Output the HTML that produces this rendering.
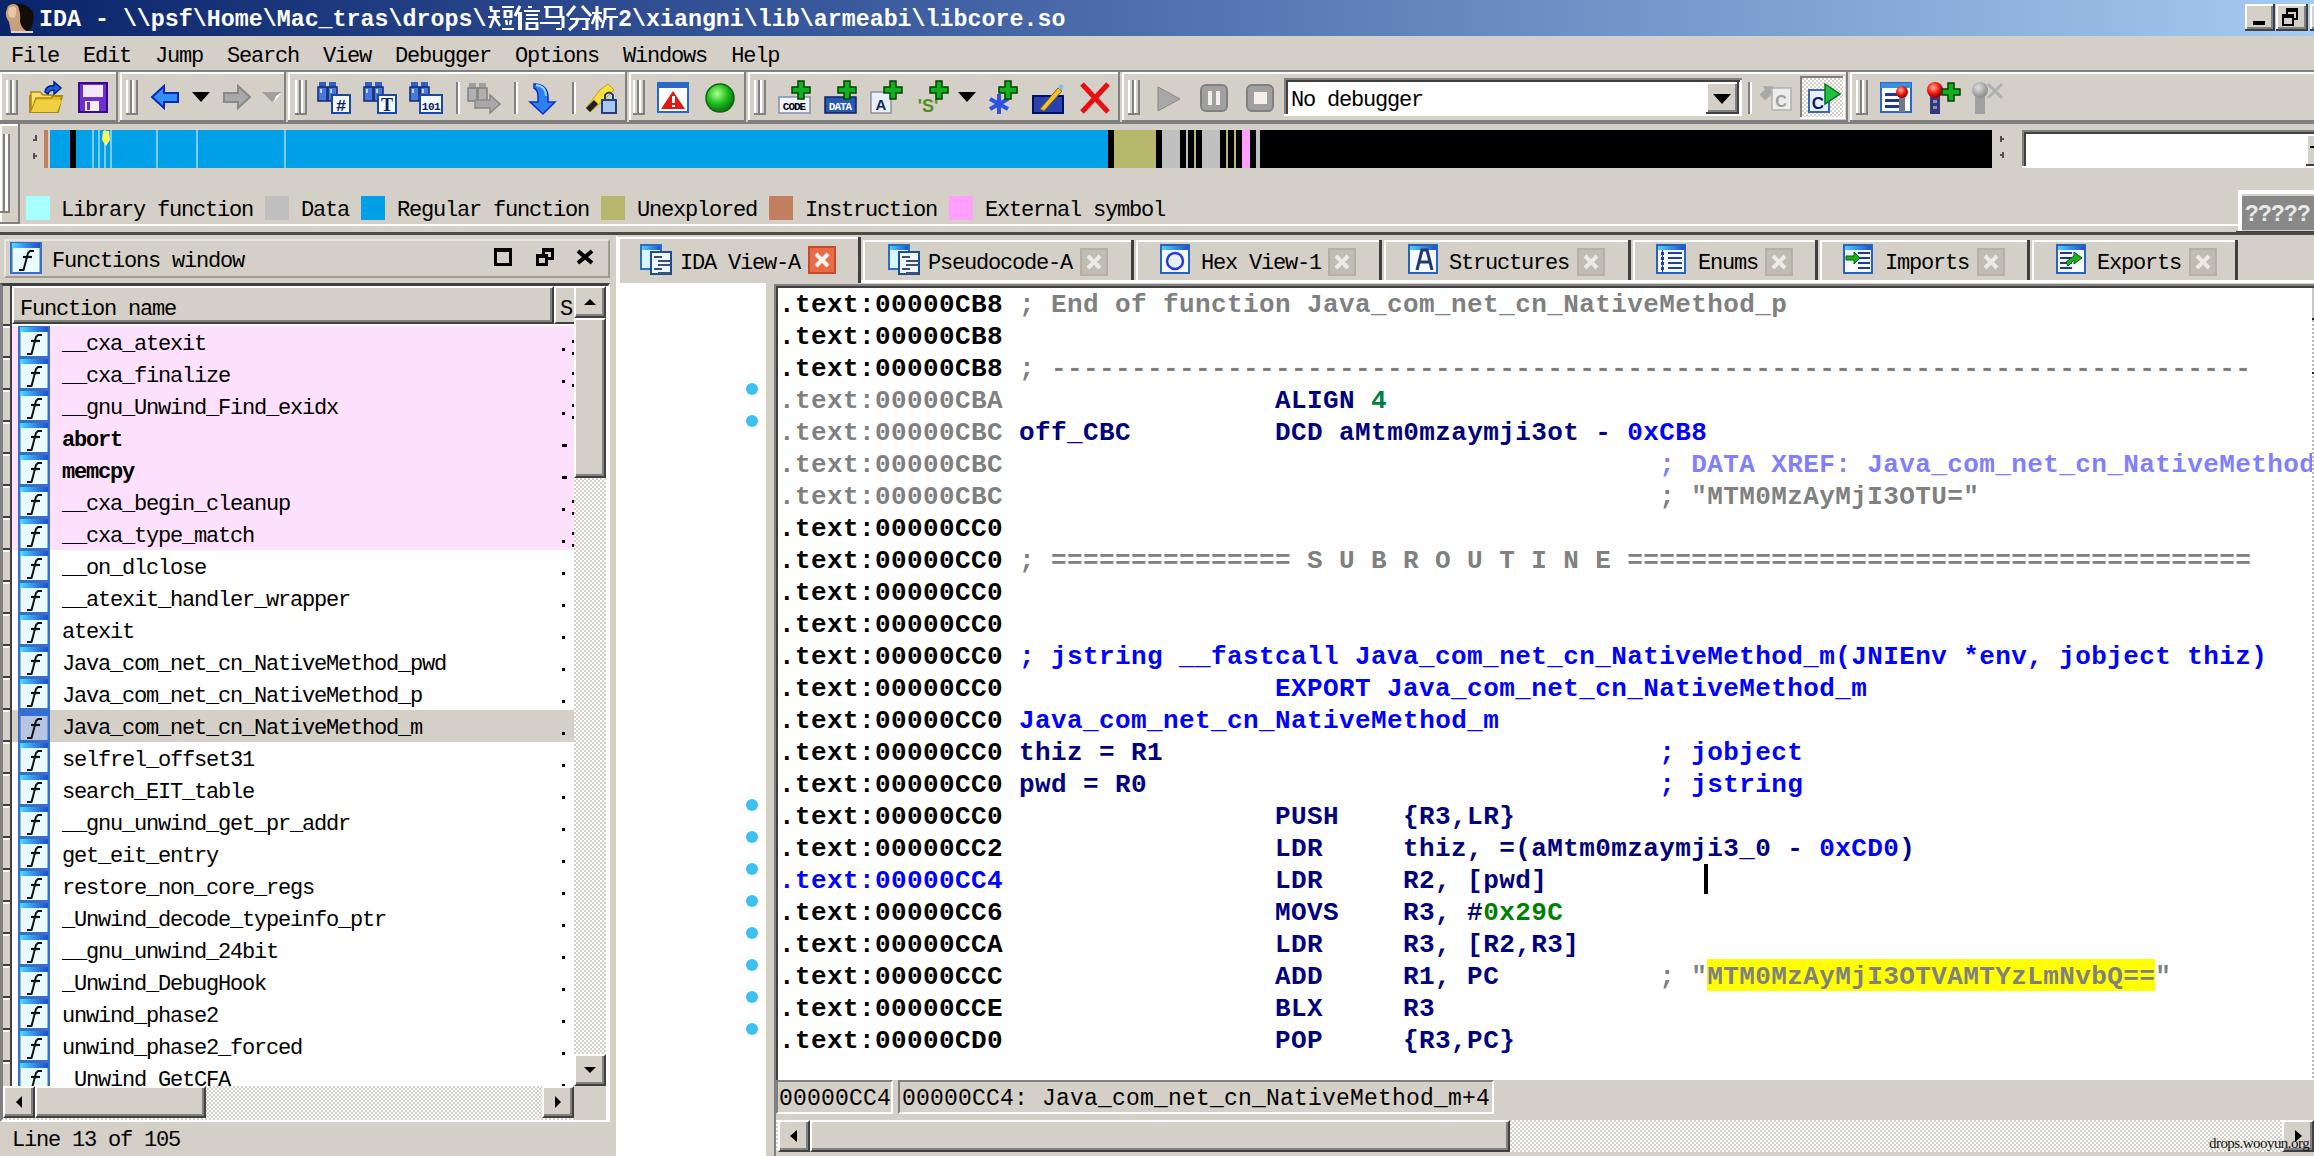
<!DOCTYPE html>
<html><head><meta charset="utf-8">
<style>
*{margin:0;padding:0;box-sizing:border-box}
html,body{width:2314px;height:1156px;overflow:hidden;background:#D4D0C8;position:relative}
.a{position:absolute}
.ui{font-family:"Liberation Mono",monospace;font-size:22px;letter-spacing:-1.2px;color:#000;white-space:pre;line-height:32px;padding-top:3px}
.code{font-family:"Liberation Mono",monospace;font-weight:bold;font-size:26px;letter-spacing:0.4px;white-space:pre;line-height:32px}
#title{left:0;top:0;width:2314px;height:36px;background:linear-gradient(to right,#0A246A 0%,#4262A4 42%,#A6CAF0 100%)}
#ttext2{left:618px;top:4px;font-family:"Liberation Mono",monospace;font-weight:bold;font-size:23.3px;letter-spacing:0px;color:#fff;white-space:pre;line-height:32px}
#ttext{left:39px;top:4px;font-family:"Liberation Mono",monospace;font-weight:bold;font-size:23.3px;letter-spacing:0px;color:#fff;white-space:pre;line-height:32px}
#menu{left:11px;top:38px}
.tb{top:71px;height:52px;border-top:2px solid #fff;border-bottom:2px solid #808080}
.grip{top:80px;width:12px;height:35px;border-left:2px solid #fff;border-right:2px solid #808080;box-shadow:inset -4px 0 0 #D4D0C8,inset -6px 0 0 #fff}
.sep{top:82px;width:4px;height:32px;border-left:2px solid #808080;border-right:2px solid #fff}
.nav{top:130px;height:38px}
.lsq{top:196px;width:24px;height:24px}
.ltx{top:192px}
.ficon{width:32px;height:31px;border:2px solid #3A6CC8;border-top:6px solid #2F7BE0;background:linear-gradient(#F4FCFF,#DDF4FC)}
.ficon:after{content:"f";position:absolute;left:5px;top:-3px;font-family:"Liberation Serif",serif;font-style:italic;font-size:26px;color:#000;line-height:26px}
.btn{background:#D4D0C8;border-top:2px solid #fff;border-left:2px solid #fff;border-right:2px solid #404040;border-bottom:2px solid #404040;box-shadow:inset -2px -2px 0 #808080}
.chk{background-color:#E8E6E2;background-image:repeating-conic-gradient(#D4D0C8 0 25%,#fff 0 50%);background-size:4px 4px}
.ticon{width:32px;height:32px;border:2px solid #3A6CC8;border-top:6px solid #2F7BE0;background:#F0F8FF}
.stat{font-family:"Liberation Mono",monospace;font-size:23px;letter-spacing:0.2px;color:#000;white-space:pre;line-height:34px}
</style></head>
<body>
<svg width="0" height="0" style="position:absolute"><defs>
<linearGradient id="fbar" x1="0" x2="1"><stop offset="0" stop-color="#48E0F8"/><stop offset="0.5" stop-color="#3090E8"/><stop offset="1" stop-color="#1E50C8"/></linearGradient>
<symbol id="fic" viewBox="0 0 32 32"><rect x="0" y="0" width="32" height="32" fill="#3A6EC4"/><rect x="2" y="1" width="28" height="5" fill="url(#fbar)"/><rect x="2.5" y="6" width="27" height="24" fill="#EAFBFD"/>
<path d="M24 9 L20 9 L18 11 L13.5 28 L9 28" stroke="#101010" stroke-width="2" fill="none"/><path d="M13 15 L22 15" stroke="#101010" stroke-width="2.2"/></symbol>
<symbol id="ficsel" viewBox="0 0 32 32"><rect x="0" y="0" width="32" height="32" fill="#3A6EC4"/><rect x="2" y="1" width="28" height="5" fill="#3070D8"/><rect x="2.5" y="6" width="27" height="24" fill="#B8C4E0"/>
<path d="M24 9 L20 9 L18 11 L13.5 28 L9 28" stroke="#101010" stroke-width="2" fill="none"/><path d="M13 15 L22 15" stroke="#101010" stroke-width="2.2"/></symbol>
</defs></svg>
<!-- title bar -->
<div id="title" class="a"></div>
<div id="ttext" class="a">IDA - \\psf\Home\Mac_tras\drops\</div><div id="ttext2" class="a">2\xiangni\lib\armeabi\libcore.so</div>
<!-- menu -->
<!--TT--><svg class="a" style="left:0;top:0" width="2314" height="36"><rect x="489.5" y="6" width="3" height="4" fill="#fff"/><rect x="490" y="10" width="10" height="2" fill="#fff"/><rect x="493.5" y="10" width="3" height="8" fill="#fff"/><rect x="488" y="16" width="12" height="2" fill="#fff"/><rect x="502" y="6" width="12" height="2" fill="#fff"/><rect x="503.5" y="10" width="3" height="8" fill="#fff"/><rect x="509.5" y="10" width="3" height="8" fill="#fff"/><rect x="504" y="10" width="8" height="2" fill="#fff"/><rect x="504" y="16" width="8" height="2" fill="#fff"/><rect x="502" y="28" width="12" height="2" fill="#fff"/><path d="M494 18 L490 28" stroke="#fff" stroke-width="2.5" fill="none"/><path d="M495.0 18 L500 26" stroke="#fff" stroke-width="2.5" fill="none"/><path d="M506 20 L507.0 25.0" stroke="#fff" stroke-width="2.5" fill="none"/><path d="M511.0 20 L510 25.0" stroke="#fff" stroke-width="2.5" fill="none"/><path d="M520 6 L515.0 16" stroke="#fff" stroke-width="3" fill="none"/><rect x="518" y="12" width="4" height="18" fill="#fff"/><rect x="528" y="6" width="4" height="2" fill="#fff"/><rect x="524" y="10" width="16" height="2" fill="#fff"/><rect x="526" y="14" width="12" height="2" fill="#fff"/><rect x="526" y="18" width="12" height="2" fill="#fff"/><rect x="525.5" y="22" width="3" height="8" fill="#fff"/><rect x="535.5" y="22" width="3" height="8" fill="#fff"/><rect x="526" y="22" width="12" height="2" fill="#fff"/><rect x="526" y="28" width="12" height="2" fill="#fff"/><rect x="544" y="6" width="18" height="2" fill="#fff"/><rect x="559.5" y="6" width="3" height="10" fill="#fff"/><rect x="545.5" y="8" width="3" height="10" fill="#fff"/><rect x="546" y="16" width="18" height="2" fill="#fff"/><rect x="561.5" y="16" width="3" height="12" fill="#fff"/><rect x="540" y="22" width="20" height="2" fill="#fff"/><rect x="556" y="28" width="6" height="2" fill="#fff"/><path d="M575.0 6 L567.0 16" stroke="#fff" stroke-width="3" fill="none"/><path d="M582 6 L591.0 16" stroke="#fff" stroke-width="3" fill="none"/><rect x="570" y="18" width="20" height="2" fill="#fff"/><rect x="585.5" y="18" width="3" height="12" fill="#fff"/><rect x="582" y="28" width="6" height="2" fill="#fff"/><path d="M578 18 L576 24 L569.0 30" stroke="#fff" stroke-width="3" fill="none"/><rect x="592" y="12" width="10" height="2" fill="#fff"/><rect x="595.5" y="6" width="3" height="24" fill="#fff"/><rect x="604" y="8" width="12" height="2" fill="#fff"/><rect x="603.5" y="8" width="3" height="12" fill="#fff"/><rect x="604" y="16" width="14" height="2" fill="#fff"/><rect x="609.5" y="16" width="3" height="14" fill="#fff"/><path d="M596 14 L592 24" stroke="#fff" stroke-width="2.5" fill="none"/><path d="M598 16 L602 22" stroke="#fff" stroke-width="2.5" fill="none"/><path d="M604 20 L602 28" stroke="#fff" stroke-width="2.5" fill="none"/><rect x="2245" y="4" width="30" height="27" fill="#D4D0C8"/><rect x="2245" y="4" width="30" height="2" fill="#fff"/><rect x="2245" y="4" width="2" height="27" fill="#fff"/><rect x="2245" y="29" width="30" height="2" fill="#404040"/><rect x="2273" y="4" width="2" height="27" fill="#404040"/><rect x="2247" y="27" width="26" height="2" fill="#808080"/><rect x="2271" y="6" width="2" height="23" fill="#808080"/><rect x="2253" y="21" width="12" height="4" fill="#000"/><rect x="2276" y="4" width="32" height="27" fill="#D4D0C8"/><rect x="2276" y="4" width="32" height="2" fill="#fff"/><rect x="2276" y="4" width="2" height="27" fill="#fff"/><rect x="2276" y="29" width="32" height="2" fill="#404040"/><rect x="2306" y="4" width="2" height="27" fill="#404040"/><rect x="2278" y="27" width="28" height="2" fill="#808080"/><rect x="2304" y="6" width="2" height="23" fill="#808080"/><rect x="2286" y="8" width="12" height="4" fill="#000"/><rect x="2286" y="8" width="2" height="10" fill="#000"/><rect x="2296" y="8" width="2" height="12" fill="#000"/><rect x="2292" y="18" width="6" height="2" fill="#000"/><rect x="2282" y="14" width="12" height="4" fill="#000"/><rect x="2282" y="14" width="2" height="12" fill="#000"/><rect x="2292" y="14" width="2" height="12" fill="#000"/><rect x="2282" y="24" width="12" height="2" fill="#000"/><rect x="2310" y="4" width="10" height="27" fill="#D4D0C8"/><rect x="2310" y="4" width="10" height="2" fill="#fff"/><rect x="2310" y="4" width="2" height="27" fill="#fff"/><rect x="2310" y="29" width="10" height="2" fill="#404040"/><rect x="2318" y="4" width="2" height="27" fill="#404040"/><rect x="2312" y="27" width="6" height="2" fill="#808080"/><rect x="2316" y="6" width="2" height="23" fill="#808080"/><path d="M14 4 Q26 2 33 12 Q35 22 30 30 L26 32 L20 26 L16 10 Z" fill="#140C08"/><path d="M8 6 Q14 2 18 6 Q21 14 20 22 Q22 30 30 33 L11 33 Q10 26 9 22 Q5 16 6 12 Z" fill="#C8A080"/><path d="M9 8 Q13 5 16 8 Q17 14 14 18 Q9 18 8 13 Z" fill="#E8C8A0"/><rect x="11" y="31" width="22" height="2" fill="#E8D0C8"/></svg><!--/TT-->
<div id="menu" class="a ui">File  Edit  Jump  Search  View  Debugger  Options  Windows  Help</div>

<!-- toolbar band -->
<div class="a" style="left:0;top:70px;width:2314px;height:54px;background:#D4D0C8;border-top:2px solid #808080;border-bottom:2px solid #808080"></div>

<!--TB--><svg class="a" style="left:0;top:0" width="2314" height="124"><rect x="0" y="72" width="118" height="2" fill="#FFFFFF"/><rect x="0" y="72" width="2" height="50" fill="#FFFFFF"/><rect x="116" y="72" width="2" height="50" fill="#808080"/><rect x="0" y="120" width="118" height="2" fill="#808080"/><rect x="120" y="72" width="166" height="2" fill="#FFFFFF"/><rect x="120" y="72" width="2" height="50" fill="#FFFFFF"/><rect x="284" y="72" width="2" height="50" fill="#808080"/><rect x="120" y="120" width="166" height="2" fill="#808080"/><rect x="288" y="72" width="339" height="2" fill="#FFFFFF"/><rect x="288" y="72" width="2" height="50" fill="#FFFFFF"/><rect x="625" y="72" width="2" height="50" fill="#808080"/><rect x="288" y="120" width="339" height="2" fill="#808080"/><rect x="629" y="72" width="117" height="2" fill="#FFFFFF"/><rect x="629" y="72" width="2" height="50" fill="#FFFFFF"/><rect x="744" y="72" width="2" height="50" fill="#808080"/><rect x="629" y="120" width="117" height="2" fill="#808080"/><rect x="748" y="72" width="372" height="2" fill="#FFFFFF"/><rect x="748" y="72" width="2" height="50" fill="#FFFFFF"/><rect x="1118" y="72" width="2" height="50" fill="#808080"/><rect x="748" y="120" width="372" height="2" fill="#808080"/><rect x="1122" y="72" width="726" height="2" fill="#FFFFFF"/><rect x="1122" y="72" width="2" height="50" fill="#FFFFFF"/><rect x="1846" y="72" width="2" height="50" fill="#808080"/><rect x="1122" y="120" width="726" height="2" fill="#808080"/><rect x="1850" y="72" width="464" height="2" fill="#FFFFFF"/><rect x="1850" y="72" width="2" height="50" fill="#FFFFFF"/><rect x="1850" y="120" width="464" height="2" fill="#808080"/><rect x="6" y="80" width="2" height="35" fill="#FFFFFF"/><rect x="10" y="80" width="2" height="35" fill="#808080"/><rect x="12" y="80" width="2" height="35" fill="#FFFFFF"/><rect x="16" y="80" width="2" height="35" fill="#808080"/><rect x="6" y="113" width="6" height="2" fill="#808080"/><rect x="12" y="113" width="6" height="2" fill="#808080"/><rect x="126" y="80" width="2" height="35" fill="#FFFFFF"/><rect x="130" y="80" width="2" height="35" fill="#808080"/><rect x="132" y="80" width="2" height="35" fill="#FFFFFF"/><rect x="136" y="80" width="2" height="35" fill="#808080"/><rect x="126" y="113" width="6" height="2" fill="#808080"/><rect x="132" y="113" width="6" height="2" fill="#808080"/><rect x="295" y="80" width="2" height="35" fill="#FFFFFF"/><rect x="299" y="80" width="2" height="35" fill="#808080"/><rect x="301" y="80" width="2" height="35" fill="#FFFFFF"/><rect x="305" y="80" width="2" height="35" fill="#808080"/><rect x="295" y="113" width="6" height="2" fill="#808080"/><rect x="301" y="113" width="6" height="2" fill="#808080"/><rect x="633" y="80" width="2" height="35" fill="#FFFFFF"/><rect x="637" y="80" width="2" height="35" fill="#808080"/><rect x="639" y="80" width="2" height="35" fill="#FFFFFF"/><rect x="643" y="80" width="2" height="35" fill="#808080"/><rect x="633" y="113" width="6" height="2" fill="#808080"/><rect x="639" y="113" width="6" height="2" fill="#808080"/><rect x="754" y="80" width="2" height="35" fill="#FFFFFF"/><rect x="758" y="80" width="2" height="35" fill="#808080"/><rect x="760" y="80" width="2" height="35" fill="#FFFFFF"/><rect x="764" y="80" width="2" height="35" fill="#808080"/><rect x="754" y="113" width="6" height="2" fill="#808080"/><rect x="760" y="113" width="6" height="2" fill="#808080"/><rect x="1128" y="80" width="2" height="35" fill="#FFFFFF"/><rect x="1132" y="80" width="2" height="35" fill="#808080"/><rect x="1134" y="80" width="2" height="35" fill="#FFFFFF"/><rect x="1138" y="80" width="2" height="35" fill="#808080"/><rect x="1128" y="113" width="6" height="2" fill="#808080"/><rect x="1134" y="113" width="6" height="2" fill="#808080"/><rect x="1856" y="80" width="2" height="35" fill="#FFFFFF"/><rect x="1860" y="80" width="2" height="35" fill="#808080"/><rect x="1862" y="80" width="2" height="35" fill="#FFFFFF"/><rect x="1866" y="80" width="2" height="35" fill="#808080"/><rect x="1856" y="113" width="6" height="2" fill="#808080"/><rect x="1862" y="113" width="6" height="2" fill="#808080"/><rect x="456" y="82" width="2" height="32" fill="#808080"/><rect x="458" y="82" width="2" height="32" fill="#FFFFFF"/><rect x="514" y="82" width="2" height="32" fill="#808080"/><rect x="516" y="82" width="2" height="32" fill="#FFFFFF"/><rect x="572" y="82" width="2" height="32" fill="#808080"/><rect x="574" y="82" width="2" height="32" fill="#FFFFFF"/><rect x="1748" y="82" width="2" height="32" fill="#808080"/><rect x="1750" y="82" width="2" height="32" fill="#FFFFFF"/><path d="M30 96 L30 112 L58 112 L62 96 Z" fill="#E8C020" stroke="#B08810" stroke-width="2"/><path d="M31 92 L40 92 L43 95 L52 95 L52 98 L36 98 L31 112 Z" fill="#F8E070" stroke="#B08810" stroke-width="1.5"/><path d="M36 100 L62 100 L57 112 L31 112 Z" fill="#F0D040"/><path d="M45 92 Q46 85 54 86 L54 82 L61 88 L54 94 L54 90 Q49 90 48 94 Z" fill="#2060E0" stroke="#002080" stroke-width="1.5"/><rect x="79" y="83" width="28" height="29" fill="#7030D0" stroke="#3A0890" stroke-width="2"/><rect x="83" y="85" width="20" height="12" fill="#F4E8F8"/><rect x="85" y="101" width="14" height="10" fill="#F0F0F0"/><rect x="87" y="102" width="3" height="8" fill="#7030D0"/><path d="M152 97 L164 86 L164 93 L178 93 L178 102 L164 102 L164 108 Z" fill="#3090F8" stroke="#0828B8" stroke-width="2"/><path d="M192 92 L210 92 L201 102 Z" fill="#000"/><path d="M250 97 L238 86 L238 93 L224 93 L224 102 L238 102 L238 108 Z" fill="#A8A8A8" stroke="#888" stroke-width="2"/><path d="M262 92 L282 92 L272 102 Z" fill="#A0A0A0"/><path d="M276 96 L282 92 L274 102 Z" fill="#fff"/><rect x="319" y="82" width="7" height="6" fill="#3060C0"/><rect x="329" y="82" width="7" height="6" fill="#3060C0"/><rect x="318" y="87" width="9" height="14" fill="#4878D8" stroke="#102870" stroke-width="1.5"/><rect x="328" y="87" width="9" height="14" fill="#4878D8" stroke="#102870" stroke-width="1.5"/><rect x="320" y="89" width="2" height="4" fill="#C0D8FF"/><rect x="330" y="89" width="2" height="4" fill="#C0D8FF"/><rect x="332" y="95" width="18" height="18" fill="#F4F8FF" stroke="#1848A0" stroke-width="2"/><text x="341" y="111" font-family="Liberation Mono" font-weight="bold" font-size="17" text-anchor="middle" fill="#102060">#</text><rect x="365" y="82" width="7" height="6" fill="#3060C0"/><rect x="375" y="82" width="7" height="6" fill="#3060C0"/><rect x="364" y="87" width="9" height="14" fill="#4878D8" stroke="#102870" stroke-width="1.5"/><rect x="374" y="87" width="9" height="14" fill="#4878D8" stroke="#102870" stroke-width="1.5"/><rect x="366" y="89" width="2" height="4" fill="#C0D8FF"/><rect x="376" y="89" width="2" height="4" fill="#C0D8FF"/><rect x="378" y="95" width="18" height="18" fill="#F4F8FF" stroke="#1848A0" stroke-width="2"/><text x="387" y="111" font-family="Liberation Serif" font-weight="bold" font-size="18" text-anchor="middle" fill="#102060">T</text><rect x="411" y="82" width="7" height="6" fill="#3060C0"/><rect x="421" y="82" width="7" height="6" fill="#3060C0"/><rect x="410" y="87" width="9" height="14" fill="#4878D8" stroke="#102870" stroke-width="1.5"/><rect x="420" y="87" width="9" height="14" fill="#4878D8" stroke="#102870" stroke-width="1.5"/><rect x="412" y="89" width="2" height="4" fill="#C0D8FF"/><rect x="422" y="89" width="2" height="4" fill="#C0D8FF"/><rect x="420" y="95" width="22" height="18" fill="#F4F8FF" stroke="#1848A0" stroke-width="2"/><text x="431" y="110" font-family="Liberation Mono" font-weight="bold" font-size="11" text-anchor="middle" fill="#102060" letter-spacing="-0.5">101</text><rect x="469" y="83" width="7" height="6" fill="#A0A0A0"/><rect x="479" y="83" width="7" height="6" fill="#A0A0A0"/><rect x="468" y="88" width="9" height="13" fill="#B0B0B0" stroke="#808080" stroke-width="1.5"/><rect x="478" y="88" width="9" height="13" fill="#B0B0B0" stroke="#808080" stroke-width="1.5"/><path d="M475 100 L490 100 L490 95 L500 104 L490 113 L490 108 L475 108 Z" fill="#A8A8A8" stroke="#888" stroke-width="1.5"/><path d="M534 84 Q548 84 548 98 L548 102 L555 102 L543 114 L530 102 L538 102 L538 96 Q538 90 534 88 Z" fill="#2C80F0" stroke="#0830C0" stroke-width="1.5"/><path d="M536 85 Q546 86 546 96" stroke="#90D8FF" stroke-width="2" fill="none"/><path d="M586 108 L600 90 L608 84 L614 90 L604 100 L590 112 Z" fill="#F8E040" stroke="#C8A000" stroke-width="1"/><path d="M586 108 L594 100 L598 104 L590 112 Z" fill="#202020"/><rect x="602" y="100" width="14" height="13" fill="#A8C8F0" stroke="#204080" stroke-width="2"/><path d="M605 100 L605 95 Q609 90 613 95 L613 100" stroke="#204080" stroke-width="2" fill="none"/><rect x="658" y="83" width="30" height="29" fill="#fff" stroke="#2868C8" stroke-width="2"/><rect x="658" y="83" width="30" height="5" fill="#2868C8"/><path d="M673 91 L685 109 L661 109 Z" fill="#E01818"/><rect x="672" y="96" width="3" height="7" fill="#fff"/><rect x="672" y="105" width="3" height="2" fill="#fff"/><defs><radialGradient id="gb" cx="0.4" cy="0.35" r="0.6"><stop offset="0" stop-color="#B0FF90"/><stop offset="0.6" stop-color="#20C020"/><stop offset="1" stop-color="#108010"/></radialGradient><radialGradient id="rb" cx="0.4" cy="0.35" r="0.6"><stop offset="0" stop-color="#FFB0A0"/><stop offset="0.6" stop-color="#F02010"/><stop offset="1" stop-color="#A00000"/></radialGradient><radialGradient id="gyb" cx="0.4" cy="0.35" r="0.6"><stop offset="0" stop-color="#E0E0E0"/><stop offset="1" stop-color="#909090"/></radialGradient></defs><circle cx="720" cy="98" r="14" fill="url(#gb)" stroke="#0A6A0A" stroke-width="1.5"/><rect x="779" y="97" width="31" height="16" fill="#F0F4FF" stroke="#8090A0" stroke-width="1.5"/><text x="794" y="110" font-family="Liberation Mono" font-weight="bold" font-size="11" text-anchor="middle" fill="#000" letter-spacing="-1">CODE</text><path d="M798 81 h6 v6 h6 v6 h-6 v6 h-6 v-6 h-6 v-6 h6 Z" fill="#10B020" stroke="#004000" stroke-width="1.5"/><rect x="825" y="97" width="31" height="16" fill="#2858B8" stroke="#102060" stroke-width="1.5"/><text x="840" y="110" font-family="Liberation Mono" font-weight="bold" font-size="11" text-anchor="middle" fill="#fff" letter-spacing="-1">DATA</text><path d="M844 81 h6 v6 h6 v6 h-6 v6 h-6 v-6 h-6 v-6 h6 Z" fill="#10B020" stroke="#004000" stroke-width="1.5"/><rect x="871" y="92" width="20" height="21" fill="#E8F0FF" stroke="#909090" stroke-width="1.5"/><text x="881" y="110" font-family="Liberation Sans" font-weight="bold" font-size="15" text-anchor="middle" fill="#102860">A</text><path d="M890 81 h6 v6 h6 v6 h-6 v6 h-6 v-6 h-6 v-6 h6 Z" fill="#10B020" stroke="#004000" stroke-width="1.5"/><text x="928" y="112" font-family="Liberation Sans" font-weight="bold" font-size="18" text-anchor="middle" fill="#509020">'S'</text><path d="M936 81 h6 v6 h6 v6 h-6 v6 h-6 v-6 h-6 v-6 h6 Z" fill="#10B020" stroke="#004000" stroke-width="1.5"/><path d="M958 92 L976 92 L967 102 Z" fill="#000"/><g stroke="#3050E0" stroke-width="4"><path d="M999 94 L999 114"/><path d="M990 99 L1008 109"/><path d="M990 109 L1008 99"/></g><path d="M1005 81 h6 v6 h6 v6 h-6 v6 h-6 v-6 h-6 v-6 h6 Z" fill="#10B020" stroke="#004000" stroke-width="1.5"/><rect x="1033" y="96" width="30" height="17" fill="#2840B0" stroke="#001060" stroke-width="2"/><path d="M1040 109 L1058 88 L1062 91 L1044 111 Z" fill="#F0C030" stroke="#806010" stroke-width="1"/><circle cx="1061" cy="87" r="2.5" fill="#80C0FF"/><path d="M1082 84 L1108 112 M1108 84 L1082 112" stroke="#E81010" stroke-width="5"/><path d="M1158 87 L1180 99 L1158 111 Z" fill="#A8A8A8" stroke="#888" stroke-width="1"/><rect x="1201" y="85" width="26" height="26" rx="5" fill="#A0A0A0" stroke="#808080" stroke-width="2"/><rect x="1208" y="91" width="4" height="14" fill="#F4F0E8"/><rect x="1216" y="91" width="4" height="14" fill="#F4F0E8"/><rect x="1247" y="85" width="26" height="26" rx="5" fill="#A0A0A0" stroke="#808080" stroke-width="2"/><rect x="1254" y="92" width="13" height="12" fill="#F4F0E8"/><rect x="1284" y="78" width="458" height="38" fill="#fff"/><rect x="1284" y="78" width="458" height="2" fill="#808080"/><rect x="1284" y="78" width="2" height="38" fill="#808080"/><rect x="1286" y="80" width="454" height="2" fill="#404040"/><rect x="1286" y="80" width="2" height="34" fill="#404040"/><rect x="1284" y="114" width="458" height="2" fill="#fff"/><rect x="1706" y="82" width="33" height="32" fill="#D4D0C8"/><rect x="1706" y="82" width="31" height="2" fill="#fff"/><rect x="1706" y="82" width="2" height="30" fill="#fff"/><rect x="1737" y="82" width="2" height="32" fill="#404040"/><rect x="1706" y="112" width="33" height="2" fill="#404040"/><rect x="1735" y="84" width="2" height="28" fill="#808080"/><rect x="1708" y="110" width="29" height="2" fill="#808080"/><path d="M1713 94 L1731 94 L1722 104 Z" fill="#000"/><text x="1291" y="106" font-family="Liberation Mono" font-size="22" letter-spacing="-1.2" fill="#000">No debugger</text><path d="M1760 92 L1768 84 L1776 92 L1772 92 L1772 100 L1764 100 L1764 92 Z" fill="#A8A8A8" transform="rotate(45 1768 92)"/><rect x="1772" y="88" width="19" height="22" fill="#ECECEC" stroke="#B0B0B0" stroke-width="1.5"/><text x="1781" y="107" font-family="Liberation Sans" font-weight="bold" font-size="16" text-anchor="middle" fill="#A0A0A0">C</text><defs><pattern id="chk" width="4" height="4" patternUnits="userSpaceOnUse"><rect width="4" height="4" fill="#fff"/><rect width="2" height="2" fill="#D4D0C8"/><rect x="2" y="2" width="2" height="2" fill="#D4D0C8"/></pattern></defs><rect x="1800" y="76" width="45" height="43" fill="url(#chk)"/><rect x="1800" y="76" width="45" height="2" fill="#808080"/><rect x="1800" y="76" width="2" height="43" fill="#808080"/><rect x="1843" y="76" width="2" height="43" fill="#fff"/><rect x="1800" y="117" width="45" height="2" fill="#fff"/><rect x="1809" y="90" width="20" height="22" fill="#E8F0FF" stroke="#3868B0" stroke-width="2"/><text x="1818" y="109" font-family="Liberation Sans" font-weight="bold" font-size="17" text-anchor="middle" fill="#101870">C</text><path d="M1825 84 L1840 94 L1825 104 Z" fill="#20C040" stroke="#087020" stroke-width="1.5"/><rect x="1881" y="83" width="30" height="29" fill="#fff" stroke="#2868C8" stroke-width="2"/><rect x="1881" y="83" width="30" height="5" fill="#3890E0"/><rect x="1885" y="93" width="14" height="3" fill="#203890"/><rect x="1885" y="99" width="14" height="3" fill="#203890"/><rect x="1885" y="105" width="14" height="3" fill="#203890"/><rect x="1899" y="96" width="6" height="16" fill="#707888"/><circle cx="1902" cy="92" r="6" fill="url(#rb)"/><rect x="1930" y="96" width="10" height="18" fill="#303880"/><rect x="1933" y="100" width="4" height="3" fill="#9090A0"/><rect x="1933" y="106" width="4" height="3" fill="#9090A0"/><circle cx="1935" cy="90" r="8" fill="url(#rb)"/><path d="M1948 83 h6 v6 h6 v6 h-6 v6 h-6 v-6 h-6 v-6 h6 Z" fill="#10B020" stroke="#004000" stroke-width="1.5"/><rect x="1975" y="96" width="10" height="18" fill="#A0A0A0"/><circle cx="1980" cy="90" r="8" fill="url(#gyb)"/><path d="M1988 84 L2002 98 M2002 84 L1988 98" stroke="#B0B0B0" stroke-width="3"/></svg><!--/TB-->
<!-- nav band -->

<div class="a nav" style="left:44px;width:4px;background:#C08060"></div>
<div class="a nav" style="left:50px;width:1058px;background:#00A0E8"></div>
<div class="a nav" style="left:1108px;width:884px;background:#000"></div>
<div class="a nav" style="left:1114px;width:42px;background:#B8B86C"></div>
<div class="a nav" style="left:1162px;width:18px;background:#C0C0C0"></div>
<div class="a nav" style="left:1202px;width:18px;background:#C0C0C0"></div>
<div class="a nav" style="left:1242px;width:8px;background:#FFA0FF"></div>
<div class="a nav" style="left:1256px;width:4px;background:#C0C0C0"></div>


<!-- legend -->
<div class="a lsq" style="left:26px;background:#A8FFFF"></div><div class="a ui ltx" style="left:61px">Library function</div>
<div class="a lsq" style="left:265px;background:#C0C0C0"></div><div class="a ui ltx" style="left:301px">Data</div>
<div class="a lsq" style="left:361px;background:#00A0E8"></div><div class="a ui ltx" style="left:397px">Regular function</div>
<div class="a lsq" style="left:601px;background:#B8B86C"></div><div class="a ui ltx" style="left:637px">Unexplored</div>
<div class="a lsq" style="left:769px;background:#C08060"></div><div class="a ui ltx" style="left:805px">Instruction</div>
<div class="a lsq" style="left:949px;background:#FFA0FF"></div><div class="a ui ltx" style="left:985px">External symbol</div>


<!-- separator -->
<!--NB--><svg class="a" style="left:0;top:0" width="2314" height="240"><rect x="70" y="130" width="6" height="38" fill="#000"/><rect x="92" y="130" width="2" height="38" fill="#7ACCF4"/><rect x="98" y="130" width="2" height="38" fill="#7ACCF4"/><rect x="104" y="130" width="2" height="38" fill="#7ACCF4"/><rect x="110" y="130" width="2" height="38" fill="#7ACCF4"/><rect x="156" y="130" width="2" height="38" fill="#7ACCF4"/><rect x="196" y="130" width="2" height="38" fill="#7ACCF4"/><rect x="284" y="130" width="2" height="38" fill="#7ACCF4"/><path d="M103 131 L109 131 L110 140 L106 146 L102 140 Z" fill="#F8F860"/><rect x="35" y="135" width="2" height="6" fill="#505050"/><rect x="33" y="139" width="2" height="2" fill="#505050"/><rect x="33" y="153" width="2" height="6" fill="#505050"/><rect x="35" y="155" width="2" height="2" fill="#505050"/><rect x="2000" y="136" width="2" height="6" fill="#505050"/><rect x="2002" y="138" width="2" height="2" fill="#505050"/><rect x="2002" y="152" width="2" height="6" fill="#505050"/><rect x="2000" y="154" width="2" height="2" fill="#505050"/><rect x="1186" y="130" width="2" height="38" fill="#C0C0C0"/><rect x="1194" y="130" width="2" height="38" fill="#B8B86C"/><rect x="1226" y="130" width="2" height="38" fill="#B8B86C"/><rect x="1234" y="130" width="2" height="38" fill="#B8B86C"/><rect x="0" y="124" width="20" height="2" fill="#fff"/><rect x="0" y="124" width="2" height="100" fill="#fff"/><rect x="18" y="124" width="2" height="100" fill="#808080"/><rect x="0" y="222" width="20" height="2" fill="#808080"/><rect x="3" y="134" width="2" height="79" fill="#808080"/><rect x="5" y="134" width="3" height="79" fill="#fff"/><rect x="8" y="134" width="2" height="79" fill="#808080"/><rect x="0" y="211" width="10" height="2" fill="#808080"/><rect x="2022" y="130" width="292" height="38" fill="#fff"/><rect x="2022" y="130" width="292" height="2" fill="#808080"/><rect x="2022" y="130" width="2" height="38" fill="#808080"/><rect x="2024" y="132" width="290" height="2" fill="#404040"/><rect x="2024" y="132" width="2" height="34" fill="#404040"/><rect x="2022" y="166" width="292" height="2" fill="#fff"/><rect x="2306" y="134" width="8" height="32" fill="#D4D0C8"/><rect x="2306" y="134" width="8" height="2" fill="#fff"/><rect x="2306" y="134" width="2" height="32" fill="#fff"/><rect x="2306" y="164" width="8" height="2" fill="#404040"/><rect x="2310" y="146" width="4" height="2" fill="#000"/><rect x="2238" y="190" width="76" height="44" fill="#D4D0C8"/><rect x="2238" y="190" width="76" height="4" fill="#fff"/><rect x="2238" y="190" width="4" height="44" fill="#fff"/><rect x="2242" y="196" width="72" height="34" fill="#888888"/><rect x="2236" y="231" width="78" height="4" fill="#404040"/><text x="2245" y="221" font-family="Liberation Mono" font-weight="bold" font-size="23" letter-spacing="-0.8" fill="#E8E8E8">?????</text></svg><!--/NB-->
<div class="a" style="left:0;top:224px;width:2238px;height:2px;background:#fff"></div>
<div class="a" style="left:0;top:232px;width:2314px;height:3px;background:#4C4A46"></div>

<!-- FUNCTIONS PANE -->
<div class="a" style="left:0;top:236px;width:616px;height:920px;background:#D4D0C8"></div>
<div class="a" style="left:4px;top:239px;width:606px;height:39px;background:#D4D0C8;border-bottom:2px solid #A09C94;border-right:2px solid #A09C94;border-top:2px solid #E8E6E0;border-left:2px solid #E8E6E0"></div>
<svg class="a" style="left:10px;top:242px" width="32" height="32"><use href="#fic"/></svg>
<div class="a ui" style="left:52px;top:243px">Functions window</div>
<div class="a" style="left:494px;top:248px;width:18px;height:18px;border:3px solid #000;border-top-width:4px"></div>
<div class="a" style="left:542px;top:248px;width:12px;height:12px;border:3px solid #000;border-top-width:4px"></div>
<div class="a" style="left:536px;top:254px;width:12px;height:12px;border:3px solid #000;border-top-width:4px;background:#D4D0C8"></div>
<svg class="a" style="left:576px;top:249px" width="18" height="16"><path d="M2 2L16 14M16 2L2 14" stroke="#000" stroke-width="4"/></svg>
<div class="a" style="left:0;top:283px;width:610px;height:839px;border-top:3px solid #404040;border-left:3px solid #808080;border-right:2px solid #fff;border-bottom:3px solid #fff;background:#fff"></div>
<div class="a" style="left:3px;top:286px;width:9px;height:800px;background:#D4D0C8;border-right:2px solid #404040"></div>
<div class="a" style="left:3px;top:324px;width:7px;height:2px;background:#404040"></div>
<div class="a" style="left:3px;top:326px;width:7px;height:2px;background:#fff"></div>
<div class="a" style="left:3px;top:356px;width:7px;height:2px;background:#404040"></div>
<div class="a" style="left:3px;top:358px;width:7px;height:2px;background:#fff"></div>
<div class="a" style="left:3px;top:388px;width:7px;height:2px;background:#404040"></div>
<div class="a" style="left:3px;top:390px;width:7px;height:2px;background:#fff"></div>
<div class="a" style="left:3px;top:420px;width:7px;height:2px;background:#404040"></div>
<div class="a" style="left:3px;top:422px;width:7px;height:2px;background:#fff"></div>
<div class="a" style="left:3px;top:452px;width:7px;height:2px;background:#404040"></div>
<div class="a" style="left:3px;top:454px;width:7px;height:2px;background:#fff"></div>
<div class="a" style="left:3px;top:484px;width:7px;height:2px;background:#404040"></div>
<div class="a" style="left:3px;top:486px;width:7px;height:2px;background:#fff"></div>
<div class="a" style="left:3px;top:516px;width:7px;height:2px;background:#404040"></div>
<div class="a" style="left:3px;top:518px;width:7px;height:2px;background:#fff"></div>
<div class="a" style="left:3px;top:548px;width:7px;height:2px;background:#404040"></div>
<div class="a" style="left:3px;top:550px;width:7px;height:2px;background:#fff"></div>
<div class="a" style="left:3px;top:580px;width:7px;height:2px;background:#404040"></div>
<div class="a" style="left:3px;top:582px;width:7px;height:2px;background:#fff"></div>
<div class="a" style="left:3px;top:612px;width:7px;height:2px;background:#404040"></div>
<div class="a" style="left:3px;top:614px;width:7px;height:2px;background:#fff"></div>
<div class="a" style="left:3px;top:644px;width:7px;height:2px;background:#404040"></div>
<div class="a" style="left:3px;top:646px;width:7px;height:2px;background:#fff"></div>
<div class="a" style="left:3px;top:676px;width:7px;height:2px;background:#404040"></div>
<div class="a" style="left:3px;top:678px;width:7px;height:2px;background:#fff"></div>
<div class="a" style="left:3px;top:708px;width:7px;height:2px;background:#404040"></div>
<div class="a" style="left:3px;top:710px;width:7px;height:2px;background:#fff"></div>
<div class="a" style="left:3px;top:740px;width:7px;height:2px;background:#404040"></div>
<div class="a" style="left:3px;top:742px;width:7px;height:2px;background:#fff"></div>
<div class="a" style="left:3px;top:772px;width:7px;height:2px;background:#404040"></div>
<div class="a" style="left:3px;top:774px;width:7px;height:2px;background:#fff"></div>
<div class="a" style="left:3px;top:804px;width:7px;height:2px;background:#404040"></div>
<div class="a" style="left:3px;top:806px;width:7px;height:2px;background:#fff"></div>
<div class="a" style="left:3px;top:836px;width:7px;height:2px;background:#404040"></div>
<div class="a" style="left:3px;top:838px;width:7px;height:2px;background:#fff"></div>
<div class="a" style="left:3px;top:868px;width:7px;height:2px;background:#404040"></div>
<div class="a" style="left:3px;top:870px;width:7px;height:2px;background:#fff"></div>
<div class="a" style="left:3px;top:900px;width:7px;height:2px;background:#404040"></div>
<div class="a" style="left:3px;top:902px;width:7px;height:2px;background:#fff"></div>
<div class="a" style="left:3px;top:932px;width:7px;height:2px;background:#404040"></div>
<div class="a" style="left:3px;top:934px;width:7px;height:2px;background:#fff"></div>
<div class="a" style="left:3px;top:964px;width:7px;height:2px;background:#404040"></div>
<div class="a" style="left:3px;top:966px;width:7px;height:2px;background:#fff"></div>
<div class="a" style="left:3px;top:996px;width:7px;height:2px;background:#404040"></div>
<div class="a" style="left:3px;top:998px;width:7px;height:2px;background:#fff"></div>
<div class="a" style="left:3px;top:1028px;width:7px;height:2px;background:#404040"></div>
<div class="a" style="left:3px;top:1030px;width:7px;height:2px;background:#fff"></div>
<div class="a" style="left:3px;top:1060px;width:7px;height:2px;background:#404040"></div>
<div class="a" style="left:3px;top:1062px;width:7px;height:2px;background:#fff"></div>
<div class="a" style="left:3px;top:1092px;width:7px;height:2px;background:#404040"></div>
<div class="a" style="left:3px;top:1094px;width:7px;height:2px;background:#fff"></div>
<div class="a" style="left:12px;top:286px;width:542px;height:38px;background:#D4D0C8;border-top:2px solid #fff;border-left:2px solid #fff;border-right:2px solid #404040;border-bottom:2px solid #404040;box-shadow:inset -2px -2px 0 #808080"></div>
<div class="a ui" style="left:20px;top:291px">Function name</div>
<div class="a" style="left:554px;top:286px;width:22px;height:38px;background:#D4D0C8;border-top:2px solid #fff;border-left:2px solid #fff;border-bottom:2px solid #404040"></div>
<div class="a ui" style="left:560px;top:291px">S</div>
<div class="a" style="left:12px;top:326px;width:562px;height:760px;overflow:hidden">
<div class="a" style="left:0;top:0px;width:562px;height:32px;background:#FCE0FC"></div>
<svg class="a" style="left:6px;top:0px" width="32" height="32"><use href="#fic"/></svg>
<div class="a ui" style="left:50px;top:0px;">__cxa_atexit</div>
<div class="a" style="left:550px;top:22px;width:3px;height:3px;background:#000"></div><div class="a" style="left:560px;top:14px;width:3px;height:3px;background:#000"></div><div class="a" style="left:560px;top:26px;width:3px;height:3px;background:#000"></div>
<div class="a" style="left:0;top:32px;width:562px;height:32px;background:#FCE0FC"></div>
<svg class="a" style="left:6px;top:32px" width="32" height="32"><use href="#fic"/></svg>
<div class="a ui" style="left:50px;top:32px;">__cxa_finalize</div>
<div class="a" style="left:550px;top:54px;width:3px;height:3px;background:#000"></div><div class="a" style="left:560px;top:46px;width:3px;height:3px;background:#000"></div><div class="a" style="left:560px;top:58px;width:3px;height:3px;background:#000"></div>
<div class="a" style="left:0;top:64px;width:562px;height:32px;background:#FCE0FC"></div>
<svg class="a" style="left:6px;top:64px" width="32" height="32"><use href="#fic"/></svg>
<div class="a ui" style="left:50px;top:64px;">__gnu_Unwind_Find_exidx</div>
<div class="a" style="left:550px;top:86px;width:3px;height:3px;background:#000"></div><div class="a" style="left:560px;top:78px;width:3px;height:3px;background:#000"></div><div class="a" style="left:560px;top:90px;width:3px;height:3px;background:#000"></div>
<div class="a" style="left:0;top:96px;width:562px;height:32px;background:#FCE0FC"></div>
<svg class="a" style="left:6px;top:96px" width="32" height="32"><use href="#fic"/></svg>
<div class="a ui" style="left:50px;top:96px;font-weight:bold;">abort</div>
<div class="a" style="left:550px;top:118px;width:5px;height:3px;background:#000"></div>
<div class="a" style="left:0;top:128px;width:562px;height:32px;background:#FCE0FC"></div>
<svg class="a" style="left:6px;top:128px" width="32" height="32"><use href="#fic"/></svg>
<div class="a ui" style="left:50px;top:128px;font-weight:bold;">memcpy</div>
<div class="a" style="left:550px;top:150px;width:5px;height:3px;background:#000"></div>
<div class="a" style="left:0;top:160px;width:562px;height:32px;background:#FCE0FC"></div>
<svg class="a" style="left:6px;top:160px" width="32" height="32"><use href="#fic"/></svg>
<div class="a ui" style="left:50px;top:160px;">__cxa_begin_cleanup</div>
<div class="a" style="left:550px;top:182px;width:3px;height:3px;background:#000"></div><div class="a" style="left:560px;top:174px;width:3px;height:3px;background:#000"></div><div class="a" style="left:560px;top:186px;width:3px;height:3px;background:#000"></div>
<div class="a" style="left:0;top:192px;width:562px;height:32px;background:#FCE0FC"></div>
<svg class="a" style="left:6px;top:192px" width="32" height="32"><use href="#fic"/></svg>
<div class="a ui" style="left:50px;top:192px;">__cxa_type_match</div>
<div class="a" style="left:550px;top:214px;width:3px;height:3px;background:#000"></div><div class="a" style="left:560px;top:206px;width:3px;height:3px;background:#000"></div><div class="a" style="left:560px;top:218px;width:3px;height:3px;background:#000"></div>
<div class="a" style="left:0;top:224px;width:562px;height:32px;background:#fff"></div>
<svg class="a" style="left:6px;top:224px" width="32" height="32"><use href="#fic"/></svg>
<div class="a ui" style="left:50px;top:224px;">__on_dlclose</div>
<div class="a" style="left:550px;top:246px;width:3px;height:3px;background:#000"></div>
<div class="a" style="left:0;top:256px;width:562px;height:32px;background:#fff"></div>
<svg class="a" style="left:6px;top:256px" width="32" height="32"><use href="#fic"/></svg>
<div class="a ui" style="left:50px;top:256px;">__atexit_handler_wrapper</div>
<div class="a" style="left:550px;top:278px;width:3px;height:3px;background:#000"></div>
<div class="a" style="left:0;top:288px;width:562px;height:32px;background:#fff"></div>
<svg class="a" style="left:6px;top:288px" width="32" height="32"><use href="#fic"/></svg>
<div class="a ui" style="left:50px;top:288px;">atexit</div>
<div class="a" style="left:550px;top:310px;width:3px;height:3px;background:#000"></div>
<div class="a" style="left:0;top:320px;width:562px;height:32px;background:#fff"></div>
<svg class="a" style="left:6px;top:320px" width="32" height="32"><use href="#fic"/></svg>
<div class="a ui" style="left:50px;top:320px;">Java_com_net_cn_NativeMethod_pwd</div>
<div class="a" style="left:550px;top:342px;width:3px;height:3px;background:#000"></div>
<div class="a" style="left:0;top:352px;width:562px;height:32px;background:#fff"></div>
<svg class="a" style="left:6px;top:352px" width="32" height="32"><use href="#fic"/></svg>
<div class="a ui" style="left:50px;top:352px;">Java_com_net_cn_NativeMethod_p</div>
<div class="a" style="left:550px;top:374px;width:3px;height:3px;background:#000"></div>
<div class="a" style="left:0;top:384px;width:562px;height:32px;background:#D4D0C8"></div>
<svg class="a" style="left:6px;top:384px" width="32" height="32"><use href="#ficsel"/></svg>
<div class="a ui" style="left:50px;top:384px;">Java_com_net_cn_NativeMethod_m</div>
<div class="a" style="left:550px;top:406px;width:3px;height:3px;background:#000"></div>
<div class="a" style="left:0;top:416px;width:562px;height:32px;background:#fff"></div>
<svg class="a" style="left:6px;top:416px" width="32" height="32"><use href="#fic"/></svg>
<div class="a ui" style="left:50px;top:416px;">selfrel_offset31</div>
<div class="a" style="left:550px;top:438px;width:3px;height:3px;background:#000"></div>
<div class="a" style="left:0;top:448px;width:562px;height:32px;background:#fff"></div>
<svg class="a" style="left:6px;top:448px" width="32" height="32"><use href="#fic"/></svg>
<div class="a ui" style="left:50px;top:448px;">search_EIT_table</div>
<div class="a" style="left:550px;top:470px;width:3px;height:3px;background:#000"></div>
<div class="a" style="left:0;top:480px;width:562px;height:32px;background:#fff"></div>
<svg class="a" style="left:6px;top:480px" width="32" height="32"><use href="#fic"/></svg>
<div class="a ui" style="left:50px;top:480px;">__gnu_unwind_get_pr_addr</div>
<div class="a" style="left:550px;top:502px;width:3px;height:3px;background:#000"></div>
<div class="a" style="left:0;top:512px;width:562px;height:32px;background:#fff"></div>
<svg class="a" style="left:6px;top:512px" width="32" height="32"><use href="#fic"/></svg>
<div class="a ui" style="left:50px;top:512px;">get_eit_entry</div>
<div class="a" style="left:550px;top:534px;width:3px;height:3px;background:#000"></div>
<div class="a" style="left:0;top:544px;width:562px;height:32px;background:#fff"></div>
<svg class="a" style="left:6px;top:544px" width="32" height="32"><use href="#fic"/></svg>
<div class="a ui" style="left:50px;top:544px;">restore_non_core_regs</div>
<div class="a" style="left:550px;top:566px;width:3px;height:3px;background:#000"></div>
<div class="a" style="left:0;top:576px;width:562px;height:32px;background:#fff"></div>
<svg class="a" style="left:6px;top:576px" width="32" height="32"><use href="#fic"/></svg>
<div class="a ui" style="left:50px;top:576px;">_Unwind_decode_typeinfo_ptr</div>
<div class="a" style="left:550px;top:598px;width:3px;height:3px;background:#000"></div>
<div class="a" style="left:0;top:608px;width:562px;height:32px;background:#fff"></div>
<svg class="a" style="left:6px;top:608px" width="32" height="32"><use href="#fic"/></svg>
<div class="a ui" style="left:50px;top:608px;">__gnu_unwind_24bit</div>
<div class="a" style="left:550px;top:630px;width:3px;height:3px;background:#000"></div>
<div class="a" style="left:0;top:640px;width:562px;height:32px;background:#fff"></div>
<svg class="a" style="left:6px;top:640px" width="32" height="32"><use href="#fic"/></svg>
<div class="a ui" style="left:50px;top:640px;">_Unwind_DebugHook</div>
<div class="a" style="left:550px;top:662px;width:3px;height:3px;background:#000"></div>
<div class="a" style="left:0;top:672px;width:562px;height:32px;background:#fff"></div>
<svg class="a" style="left:6px;top:672px" width="32" height="32"><use href="#fic"/></svg>
<div class="a ui" style="left:50px;top:672px;">unwind_phase2</div>
<div class="a" style="left:550px;top:694px;width:3px;height:3px;background:#000"></div>
<div class="a" style="left:0;top:704px;width:562px;height:32px;background:#fff"></div>
<svg class="a" style="left:6px;top:704px" width="32" height="32"><use href="#fic"/></svg>
<div class="a ui" style="left:50px;top:704px;">unwind_phase2_forced</div>
<div class="a" style="left:550px;top:726px;width:3px;height:3px;background:#000"></div>
<div class="a" style="left:0;top:736px;width:562px;height:32px;background:#fff"></div>
<svg class="a" style="left:6px;top:736px" width="32" height="32"><use href="#fic"/></svg>
<div class="a ui" style="left:50px;top:736px;">_Unwind_GetCFA</div>
<div class="a" style="left:550px;top:758px;width:3px;height:3px;background:#000"></div>
</div>
<div class="a chk" style="left:574px;top:286px;width:32px;height:800px"></div>
<div class="a btn" style="left:574px;top:286px;width:32px;height:32px"><svg width="28" height="28"><path d="M8 17L14 11L20 17Z" fill="#000"/></svg></div>
<div class="a btn" style="left:574px;top:318px;width:32px;height:160px"></div>
<div class="a btn" style="left:574px;top:1054px;width:32px;height:32px"><svg width="28" height="28"><path d="M8 11L14 17L20 11Z" fill="#000"/></svg></div>
<div class="a chk" style="left:3px;top:1086px;width:571px;height:34px"></div>
<div class="a btn" style="left:3px;top:1086px;width:32px;height:32px"><svg width="28" height="28"><path d="M17 8L11 14L17 20Z" fill="#000"/></svg></div>
<div class="a btn" style="left:35px;top:1086px;width:171px;height:32px"></div>
<div class="a btn" style="left:542px;top:1086px;width:32px;height:32px"><svg width="28" height="28"><path d="M11 8L17 14L11 20Z" fill="#000"/></svg></div>
<div class="a" style="left:574px;top:1086px;width:32px;height:34px;background:#D4D0C8"></div>
<div class="a ui" style="left:12px;top:1122px">Line 13 of 105</div>

<!-- IDA VIEW -->
<div class="a" style="left:616px;top:236px;width:1698px;height:920px;background:#D4D0C8"></div>
<div class="a" style="left:616px;top:280px;width:1698px;height:3px;background:#fff"></div>
<!--TABS--><svg class="a" style="left:0;top:0" width="2314" height="290"><defs><linearGradient id="tbar" x1="0" x2="1"><stop offset="0" stop-color="#50D0F8"/><stop offset="1" stop-color="#2050D0"/></linearGradient></defs><rect x="618" y="237" width="243" height="46" fill="#D4D0C8"/><rect x="618" y="237" width="243" height="2" fill="#fff"/><rect x="618" y="237" width="2" height="46" fill="#fff"/><rect x="858" y="237" width="3" height="46" fill="#404040"/><rect x="863" y="240" width="271" height="40" fill="#D4D0C8"/><rect x="863" y="240" width="271" height="2" fill="#fff"/><rect x="863" y="240" width="2" height="40" fill="#fff"/><rect x="1131" y="240" width="3" height="40" fill="#404040"/><rect x="1136" y="240" width="246" height="40" fill="#D4D0C8"/><rect x="1136" y="240" width="246" height="2" fill="#fff"/><rect x="1136" y="240" width="2" height="40" fill="#fff"/><rect x="1379" y="240" width="3" height="40" fill="#404040"/><rect x="1384" y="240" width="247" height="40" fill="#D4D0C8"/><rect x="1384" y="240" width="247" height="2" fill="#fff"/><rect x="1384" y="240" width="2" height="40" fill="#fff"/><rect x="1628" y="240" width="3" height="40" fill="#404040"/><rect x="1633" y="240" width="185" height="40" fill="#D4D0C8"/><rect x="1633" y="240" width="185" height="2" fill="#fff"/><rect x="1633" y="240" width="2" height="40" fill="#fff"/><rect x="1815" y="240" width="3" height="40" fill="#404040"/><rect x="1820" y="240" width="210" height="40" fill="#D4D0C8"/><rect x="1820" y="240" width="210" height="2" fill="#fff"/><rect x="1820" y="240" width="2" height="40" fill="#fff"/><rect x="2027" y="240" width="3" height="40" fill="#404040"/><rect x="2032" y="240" width="206" height="40" fill="#D4D0C8"/><rect x="2032" y="240" width="206" height="2" fill="#fff"/><rect x="2032" y="240" width="2" height="40" fill="#fff"/><rect x="2235" y="240" width="3" height="40" fill="#404040"/><rect x="640" y="244" width="22" height="26" fill="#2A70C0"/><rect x="642" y="250" width="18" height="18" fill="#D8F4FF"/><rect x="642" y="246" width="18" height="4" fill="url(#tbar)"/><rect x="650" y="251" width="22" height="24" fill="#1E4E8C"/><rect x="652" y="253" width="18" height="20" fill="#F0F6FF"/><rect x="654" y="256" width="8" height="2" fill="#405070"/><rect x="658" y="260" width="12" height="2" fill="#405070"/><rect x="658" y="264" width="12" height="2" fill="#405070"/><rect x="654" y="268" width="8" height="2" fill="#405070"/><rect x="658" y="272" width="12" height="2" fill="#405070"/><rect x="888" y="244" width="22" height="26" fill="#2A70C0"/><rect x="890" y="250" width="18" height="18" fill="#D8F4FF"/><rect x="890" y="246" width="18" height="4" fill="url(#tbar)"/><rect x="898" y="251" width="22" height="24" fill="#1E4E8C"/><rect x="900" y="253" width="18" height="20" fill="#F0F6FF"/><rect x="902" y="256" width="8" height="2" fill="#405070"/><rect x="906" y="260" width="12" height="2" fill="#405070"/><rect x="906" y="264" width="12" height="2" fill="#405070"/><rect x="902" y="268" width="8" height="2" fill="#405070"/><rect x="906" y="272" width="12" height="2" fill="#405070"/><rect x="1160" y="244" width="30" height="30" fill="#2A64B8"/><rect x="1162" y="250" width="26" height="22" fill="#F4FAFF"/><rect x="1162" y="246" width="26" height="4" fill="url(#tbar)"/><ellipse cx="1175" cy="261" rx="8" ry="8" fill="#E8F0F8" stroke="#2838D8" stroke-width="2.5"/><rect x="1408" y="244" width="30" height="30" fill="#2A64B8"/><rect x="1410" y="250" width="26" height="22" fill="#F4FAFF"/><rect x="1410" y="246" width="26" height="4" fill="url(#tbar)"/><path d="M1417 270 L1422 250 L1427 250 L1432 270 M1419 262 L1430 262" stroke="#203870" stroke-width="3" fill="none"/><rect x="1656" y="244" width="30" height="30" fill="#2A64B8"/><rect x="1658" y="250" width="26" height="22" fill="#F4FAFF"/><rect x="1658" y="246" width="26" height="4" fill="url(#tbar)"/><rect x="1661" y="252" width="3" height="3" fill="#2040A0"/><rect x="1668" y="252" width="14" height="2" fill="#2040A0"/><rect x="1661" y="257" width="3" height="3" fill="#2040A0"/><rect x="1668" y="257" width="14" height="2" fill="#2040A0"/><rect x="1661" y="262" width="3" height="3" fill="#2040A0"/><rect x="1668" y="262" width="14" height="2" fill="#2040A0"/><rect x="1661" y="267" width="3" height="3" fill="#2040A0"/><rect x="1668" y="267" width="14" height="2" fill="#2040A0"/><rect x="1662" y="250" width="1" height="22" fill="#2040A0"/><rect x="1843" y="244" width="30" height="30" fill="#2A64B8"/><rect x="1845" y="250" width="26" height="22" fill="#F4FAFF"/><rect x="1845" y="246" width="26" height="4" fill="url(#tbar)"/><rect x="1858" y="252" width="12" height="2" fill="#203890"/><rect x="1858" y="257" width="12" height="2" fill="#203890"/><rect x="1858" y="262" width="12" height="2" fill="#203890"/><rect x="1858" y="267" width="12" height="2" fill="#203890"/><path d="M1846 256 L1854 256 L1854 252 L1860 258 L1854 264 L1854 260 L1846 260 Z" fill="#20B020" stroke="#006000" stroke-width="1"/><rect x="2056" y="244" width="30" height="30" fill="#2A64B8"/><rect x="2058" y="250" width="26" height="22" fill="#F4FAFF"/><rect x="2058" y="246" width="26" height="4" fill="url(#tbar)"/><rect x="2060" y="252" width="12" height="2" fill="#203890"/><rect x="2060" y="257" width="12" height="2" fill="#203890"/><rect x="2060" y="262" width="12" height="2" fill="#203890"/><rect x="2060" y="267" width="12" height="2" fill="#203890"/><path d="M2066 262 L2074 256 L2074 252 L2082 258 L2074 264 L2074 260 L2068 266 Z" fill="#20B020" stroke="#006000" stroke-width="1"/><rect x="808" y="246" width="28" height="28" fill="#C84A2C"/><rect x="810" y="248" width="24" height="24" fill="#E86C48"/><path d="M816 254 L828 266 M828 254 L816 266" stroke="#FFF4F0" stroke-width="4"/><rect x="1080" y="248" width="28" height="28" fill="#B4B0A8"/><rect x="1082" y="250" width="24" height="24" fill="#C0BCB4"/><path d="M1088 256 L1100 268 M1100 256 L1088 268" stroke="#ECEAE6" stroke-width="4"/><rect x="1328" y="248" width="28" height="28" fill="#B4B0A8"/><rect x="1330" y="250" width="24" height="24" fill="#C0BCB4"/><path d="M1336 256 L1348 268 M1348 256 L1336 268" stroke="#ECEAE6" stroke-width="4"/><rect x="1577" y="248" width="28" height="28" fill="#B4B0A8"/><rect x="1579" y="250" width="24" height="24" fill="#C0BCB4"/><path d="M1585 256 L1597 268 M1597 256 L1585 268" stroke="#ECEAE6" stroke-width="4"/><rect x="1765" y="248" width="28" height="28" fill="#B4B0A8"/><rect x="1767" y="250" width="24" height="24" fill="#C0BCB4"/><path d="M1773 256 L1785 268 M1785 256 L1773 268" stroke="#ECEAE6" stroke-width="4"/><rect x="1977" y="248" width="28" height="28" fill="#B4B0A8"/><rect x="1979" y="250" width="24" height="24" fill="#C0BCB4"/><path d="M1985 256 L1997 268 M1997 256 L1985 268" stroke="#ECEAE6" stroke-width="4"/><rect x="2189" y="248" width="28" height="28" fill="#B4B0A8"/><rect x="2191" y="250" width="24" height="24" fill="#C0BCB4"/><path d="M2197 256 L2209 268 M2209 256 L2197 268" stroke="#ECEAE6" stroke-width="4"/></svg><!--/TABS-->



<div class="a ui" style="left:680px;top:245px">IDA View-A</div>



<div class="a ui" style="left:928px;top:245px">Pseudocode-A</div>



<div class="a ui" style="left:1201px;top:245px">Hex View-1</div>



<div class="a ui" style="left:1449px;top:245px">Structures</div>



<div class="a ui" style="left:1698px;top:245px">Enums</div>



<div class="a ui" style="left:1885px;top:245px">Imports</div>



<div class="a ui" style="left:2097px;top:245px">Exports</div>

<div class="a" style="left:616px;top:283px;width:150px;height:873px;background:#fff"></div>
<div class="a" style="left:616px;top:236px;width:2px;height:920px;background:#fff"></div>
<div class="a" style="left:746px;top:383px;width:12px;height:12px;border-radius:6px;background:#40C0F0"></div>
<div class="a" style="left:746px;top:415px;width:12px;height:12px;border-radius:6px;background:#40C0F0"></div>
<div class="a" style="left:746px;top:799px;width:12px;height:12px;border-radius:6px;background:#40C0F0"></div>
<div class="a" style="left:746px;top:831px;width:12px;height:12px;border-radius:6px;background:#40C0F0"></div>
<div class="a" style="left:746px;top:863px;width:12px;height:12px;border-radius:6px;background:#40C0F0"></div>
<div class="a" style="left:746px;top:895px;width:12px;height:12px;border-radius:6px;background:#40C0F0"></div>
<div class="a" style="left:746px;top:927px;width:12px;height:12px;border-radius:6px;background:#40C0F0"></div>
<div class="a" style="left:746px;top:959px;width:12px;height:12px;border-radius:6px;background:#40C0F0"></div>
<div class="a" style="left:746px;top:991px;width:12px;height:12px;border-radius:6px;background:#40C0F0"></div>
<div class="a" style="left:746px;top:1023px;width:12px;height:12px;border-radius:6px;background:#40C0F0"></div>
<div class="a" style="left:774px;top:284px;width:1540px;height:872px;background:#fff;border-top:2px solid #808080;border-left:2px solid #808080"></div><div class="a" style="left:776px;top:286px;width:1538px;height:870px;background:#fff;border-top:2px solid #404040;border-left:2px solid #404040"></div>
<div class="a code" style="left:779px;top:289px;width:1535px;height:792px;overflow:hidden"><span style="color:#000">.text:00000CB8</span><span style="color:#808080"> ; End of function Java_com_net_cn_NativeMethod_p</span>
<span style="color:#000">.text:00000CB8</span>
<span style="color:#000">.text:00000CB8</span><span style="color:#808080"> ; ---------------------------------------------------------------------------</span>
<span style="color:#808080">.text:00000CBA</span>                 <span style="color:#000080">ALIGN </span><span style="color:#008040">4</span>
<span style="color:#808080">.text:00000CBC</span> <span style="color:#000080">off_CBC         </span><span style="color:#000080">DCD aMtm0mzaymji3ot - </span><span style="color:#0000FF">0xCB8</span>
<span style="color:#808080">.text:00000CBC</span>                                         <span style="color:#8080FF">; DATA XREF: Java_com_net_cn_NativeMethod_p+4</span>
<span style="color:#808080">.text:00000CBC</span>                                         <span style="color:#808080">; "MTM0MzAyMjI3OTU="</span>
<span style="color:#000">.text:00000CC0</span>
<span style="color:#000">.text:00000CC0</span><span style="color:#808080"> ; =============== S U B R O U T I N E =======================================</span>
<span style="color:#000">.text:00000CC0</span>
<span style="color:#000">.text:00000CC0</span>
<span style="color:#000">.text:00000CC0</span><span style="color:#0000FF"> ; jstring __fastcall Java_com_net_cn_NativeMethod_m(JNIEnv *env, jobject thiz)</span>
<span style="color:#000">.text:00000CC0</span>                 <span style="color:#0000FF">EXPORT Java_com_net_cn_NativeMethod_m</span>
<span style="color:#000">.text:00000CC0</span> <span style="color:#0000FF">Java_com_net_cn_NativeMethod_m</span>
<span style="color:#000">.text:00000CC0</span> <span style="color:#000080">thiz = R1                               </span><span style="color:#0000FF">; jobject</span>
<span style="color:#000">.text:00000CC0</span> <span style="color:#000080">pwd = R0                                </span><span style="color:#0000FF">; jstring</span>
<span style="color:#000">.text:00000CC0</span>                 <span style="color:#000080">PUSH    {R3,LR}</span>
<span style="color:#000">.text:00000CC2</span>                 <span style="color:#000080">LDR     thiz, =(aMtm0mzaymji3_0 - </span><span style="color:#0000FF">0xCD0</span><span style="color:#000080">)</span>
<span style="color:#0000FF">.text:00000CC4</span>                 <span style="color:#000080">LDR     R2, [pwd]</span>
<span style="color:#000">.text:00000CC6</span>                 <span style="color:#000080">MOVS    R3, #</span><span style="color:#008000">0x29C</span>
<span style="color:#000">.text:00000CCA</span>                 <span style="color:#000080">LDR     R3, [R2,R3]</span>
<span style="color:#000">.text:00000CCC</span>                 <span style="color:#000080">ADD     R1, PC          </span><span style="color:#808080">; "</span><span style="color:#808080;background:#FFFF00;display:inline-block;height:32px;vertical-align:top;margin-top:-2px;line-height:36px">MTM0MzAyMjI3OTVAMTYzLmNvbQ==</span><span style="color:#808080">"</span>
<span style="color:#000">.text:00000CCE</span>                 <span style="color:#000080">BLX     R3</span>
<span style="color:#000">.text:00000CD0</span>                 <span style="color:#000080">POP     {R3,PC}</span></div>
<div class="a" style="left:1704px;top:864px;width:4px;height:30px;background:#000"></div>
<div class="a" style="left:776px;top:1080px;width:1538px;height:76px;background:#D4D0C8"></div>
<div class="a" style="left:776px;top:1080px;width:117px;height:34px;border-top:2px solid #808080;border-left:2px solid #808080;border-right:2px solid #fff;border-bottom:2px solid #fff"></div>
<div class="a" style="left:898px;top:1080px;width:596px;height:34px;border-top:2px solid #808080;border-left:2px solid #808080;border-right:2px solid #fff;border-bottom:2px solid #fff"></div>
<div class="a stat" style="left:779px;top:1082px">00000CC4</div>
<div class="a stat" style="left:902px;top:1082px">00000CC4: Java_com_net_cn_NativeMethod_m+4</div>
<div class="a" style="left:774px;top:1114px;width:2px;height:42px;background:#808080"></div>
<div class="a chk" style="left:776px;top:1120px;width:1538px;height:32px"></div>
<div class="a btn" style="left:778px;top:1120px;width:32px;height:32px"><svg width="28" height="28"><path d="M17 8L10 14L17 20Z" fill="#000"/></svg></div>
<div class="a btn" style="left:810px;top:1120px;width:700px;height:32px"></div>
<div class="a btn" style="left:2282px;top:1120px;width:32px;height:32px"><svg width="28" height="28"><path d="M11 8L18 14L11 20Z" fill="#000"/></svg></div>
<div class="a" style="left:2209px;top:1133px;font-family:'Liberation Serif',serif;font-size:15px;color:#111;line-height:20px;letter-spacing:-0.55px">drops.wooyun.org</div>
<div class="a" style="left:2312px;top:288px;width:2px;height:792px;background:repeating-linear-gradient(#B8B8B8 0 2px,#fff 2px 4px)"></div><div class="a" style="left:2312px;top:288px;width:2px;height:30px;background:#C8C8C8"></div><div class="a" style="left:2312px;top:318px;width:2px;height:2px;background:#202020"></div><div class="a" style="left:2312px;top:372px;width:2px;height:2px;background:#202020"></div>

</body></html>
